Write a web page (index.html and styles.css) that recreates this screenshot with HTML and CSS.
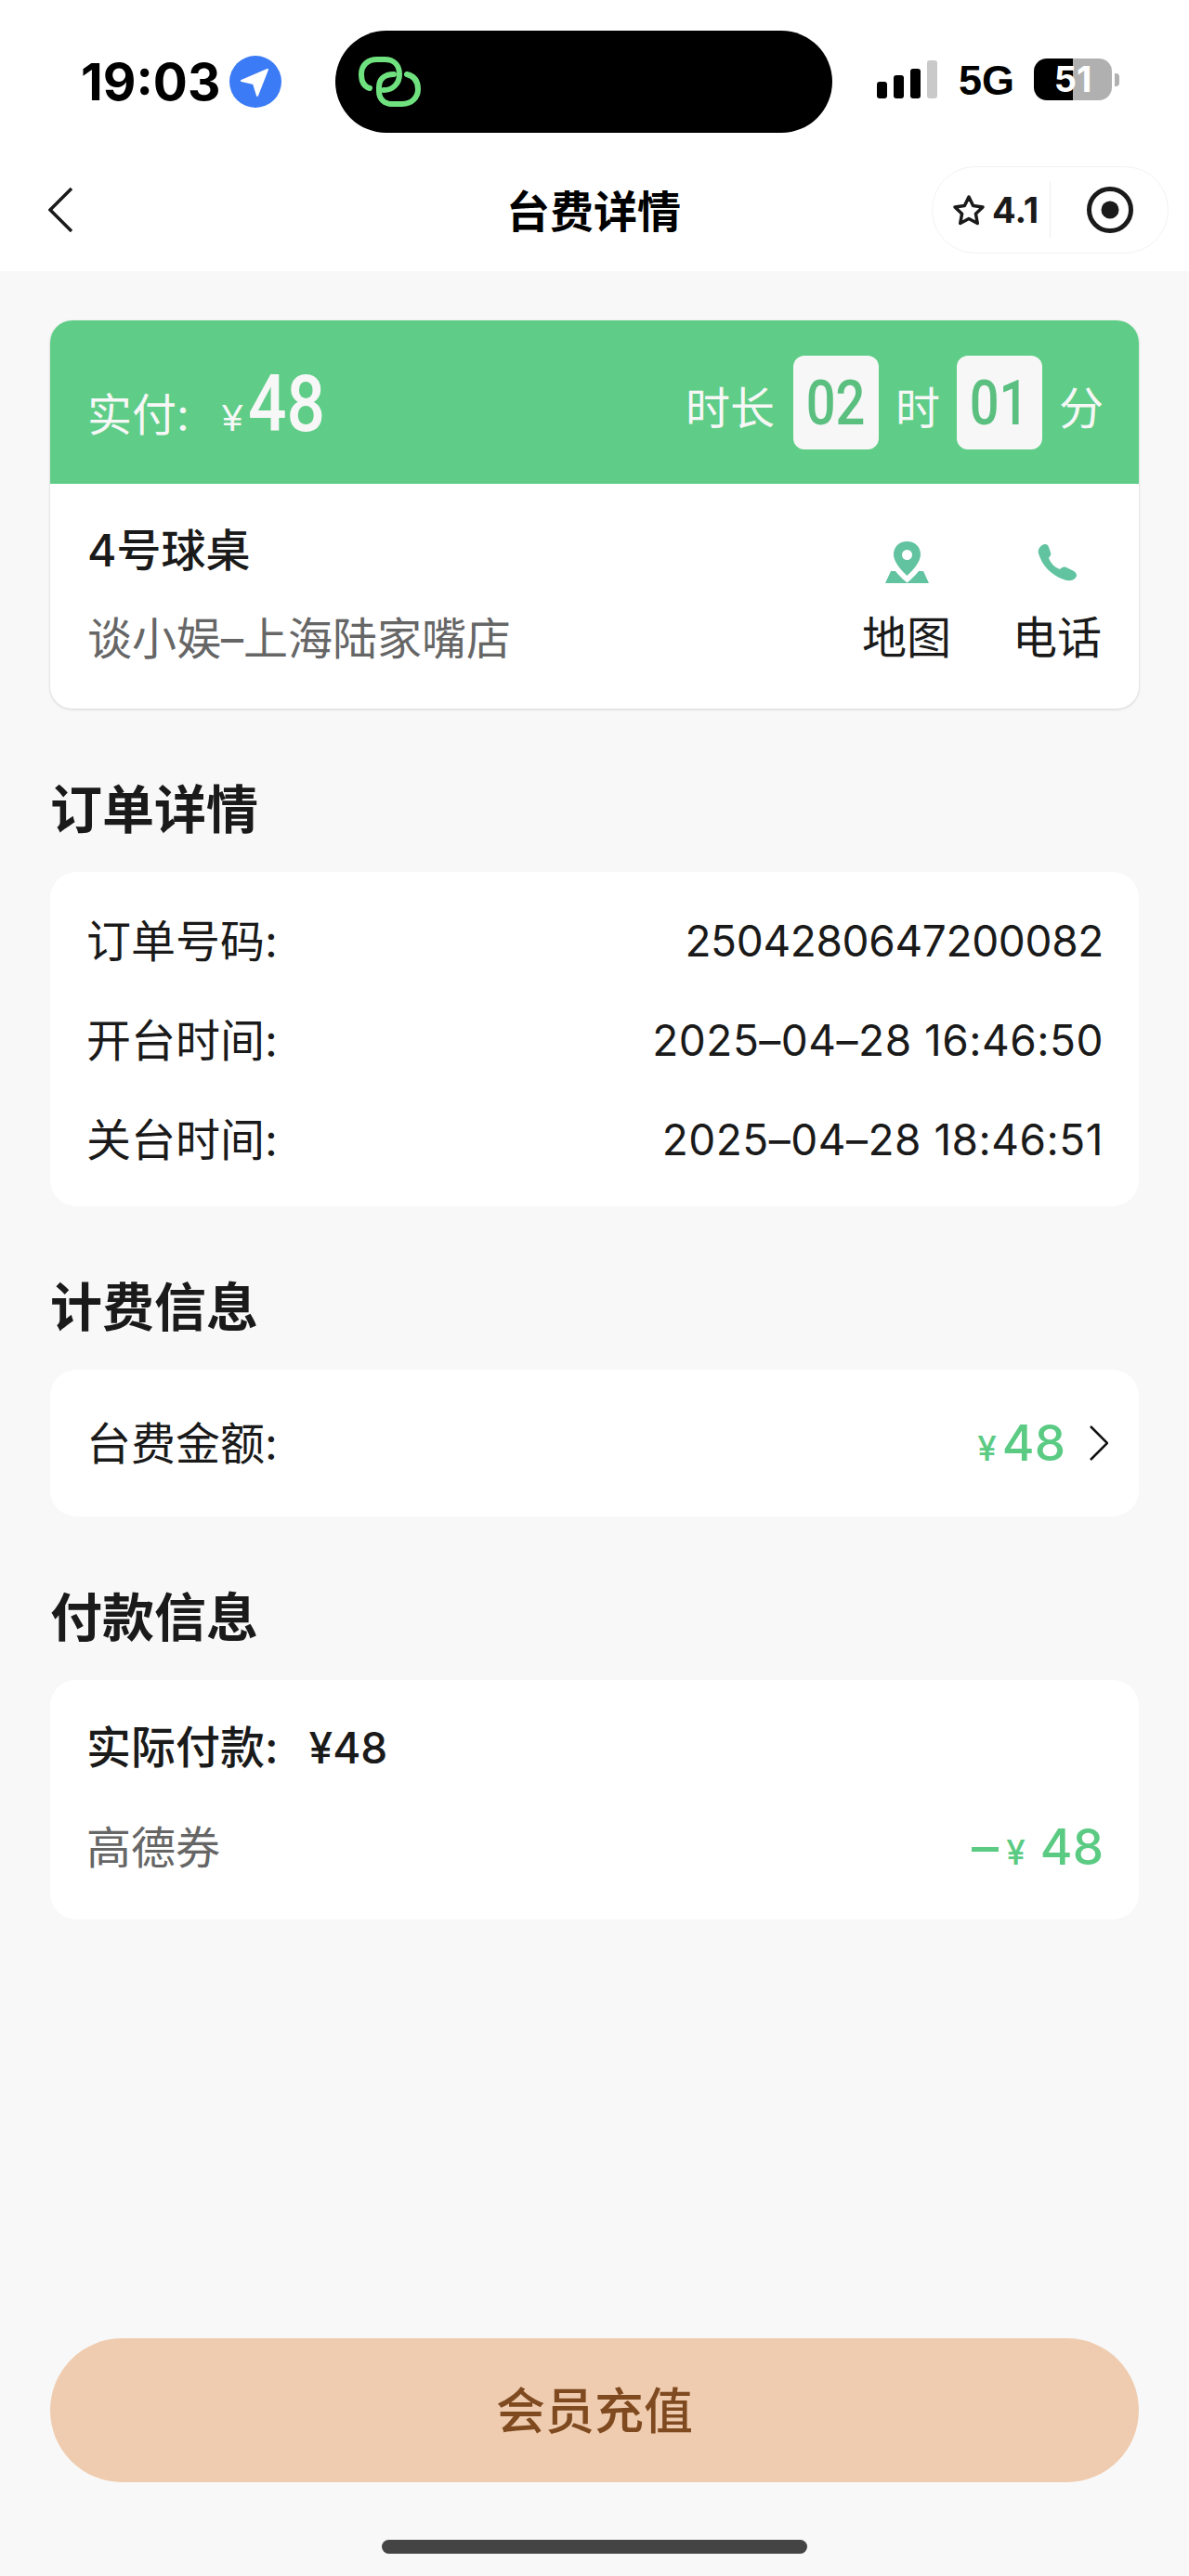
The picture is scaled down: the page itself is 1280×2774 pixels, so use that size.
FILE: index.html
```html
<!DOCTYPE html>
<html lang="zh-CN">

<head>
	<meta charset="UTF-8">
	<meta name="viewport" content="width=device-width, initial-scale=1.0">
	<title>台费详情</title>
	<link rel="stylesheet" href="styles.css">
</head>

<body>
	<div class="page">
		<!-- Status bar -->
		<div class="status-bar">
			<span class="time">19:03</span>
			<svg class="locate" viewBox="0 0 56 56">
				<circle cx="28" cy="28" r="28" fill="#3b7bf6" />
				<path d="M41 15 13 27l13 3 4 13z" fill="#fff" stroke="#fff" stroke-width="2" stroke-linejoin="round" />
			</svg>
			<div class="island">
				<svg class="island-logo" viewBox="0 0 67 54">
					<path d="M12 34C5 32 3 26 3 19 3 9 10 3 20 3h8c10 0 16 6 16 16s-7 17-17 17" fill="none" stroke="#6fe27f"
						stroke-width="6" stroke-linecap="round" />
					<path d="M38 19c-10 0-16 5-16 14v4c0 9 6 14 14 14h11c10 0 17-7 17-16 0-8-4-14-12-16" fill="none"
						stroke="#6fe27f" stroke-width="6" stroke-linecap="round" />
				</svg>
			</div>
			<div class="signal">
				<i class="bar-1"></i>
				<i class="bar-2"></i>
				<i class="bar-3"></i>
				<i class="bar-4"></i>
			</div>
			<span class="network">5G</span>
			<div class="battery">51</div>
			<i class="battery-nub"></i>
		</div>

		<!-- Nav -->
		<header class="nav">
			<svg class="back" viewBox="0 0 26 48">
				<path d="M25 1 2 24l23 23" fill="none" stroke="#1a1a1a" stroke-width="3.5" />
			</svg>
			<h1 class="nav-title">台费详情</h1>
			<div class="capsule">
				<svg class="star" viewBox="0 0 36 34">
					<path d="m18 3 4.6 9.6 10.4 1.4-7.600 7.200 1.900 10.300L18 26.500 8.700 31.500l1.900-10.300L3 14l10.400-1.400z"
						fill="none" stroke="#1a1a1a" stroke-width="3.500" stroke-linejoin="round" />
				</svg>
				<span class="rating">4.1</span>
				<i class="capsule-line"></i>
				<svg class="target" viewBox="0 0 50 50">
					<circle cx="25" cy="25" r="22.500" fill="none" stroke="#1a1a1a" stroke-width="5" />
					<circle cx="25" cy="25" r="9.500" fill="#1a1a1a" />
				</svg>
			</div>
		</header>

		<main class="content">
			<section class="hero">
				<div class="hero-top">
					<div class="paid">
						<span class="paid-label">实付:</span>
						<span class="paid-yen">¥</span>
						<span class="paid-num">48</span>
					</div>
					<div class="duration">
						<span class="duration-text duration-label">时长</span>
						<b class="time-box"><span class="time-digits">02</span></b>
						<span class="duration-text">时</span>
						<b class="time-box"><span class="time-digits">01</span></b>
						<span class="duration-text">分</span>
					</div>
				</div>
				<div class="hero-body">
					<div class="venue">
						<div class="venue-table">4号球桌</div>
						<div class="venue-name">谈小娱–上海陆家嘴店</div>
					</div>
					<div class="action action-map">
						<svg class="icon-pin" viewBox="0 0 47 45">
							<path fill-rule="evenodd"
								d="M23.500 0C32 0 38 6 38 14c0 8-8 17-14.500 23C17 31 9 22 9 14 9 6 15 0 23.500 0zm0 9a5.500 5.500 0 1 0 0 11 5.500 5.500 0 0 0 0-11z"
								fill="#62c3a0" />
							<path d="M6 32h5c3 4 7 8 12.500 12.500C29 40 33 36 36 32h5l6 13H0z" fill="#62c3a0" />
						</svg>
						<span>地图</span>
					</div>
					<div class="action action-phone">
						<svg class="icon-phone" viewBox="0 0 43 41">
							<path d="M5 2C8 0 11 1 12 4l2 6c1 3-1 4-2 6 2 5 6 10 12 12 2-2 4-3 7-2l8 4c3 2 4 5 2 7-3 4-8 4-13 2C14 34 5 24 1 11 0 7 2 4 5 2z"
								fill="#62c3a0" />
						</svg>
						<span>电话</span>
					</div>
				</div>
			</section>

			<section class="block">
				<h2 class="block-title">订单详情</h2>
				<div class="card card-order">
					<div class="row">
						<span class="row-label">订单号码:</span>
						<span class="order-no">2504280647200082</span>
					</div>
					<div class="row">
						<span class="row-label">开台时间:</span>
						<span class="order-date">2025–04–28 16:46:50</span>
					</div>
					<div class="row">
						<span class="row-label">关台时间:</span>
						<span class="order-date">2025–04–28 18:46:51</span>
					</div>
				</div>
			</section>

			<section class="block">
				<h2 class="block-title">计费信息</h2>
				<div class="card card-fee">
					<span class="row-label">台费金额:</span>
					<div class="fee-value">
						<span class="money"><small>¥</small>48</span>
						<svg class="chevron" viewBox="0 0 20 38">
							<path d="m1 1 18 18L1 37" fill="none" stroke="#111" stroke-width="2.500" />
						</svg>
					</div>
				</div>
			</section>

			<section class="block">
				<h2 class="block-title">付款信息</h2>
				<div class="card card-pay">
					<div class="pay-total">实际付款:<span class="pay-sum">¥48</span></div>
					<div class="pay-coupon">
						<span class="row-label">高德券</span>
						<span class="money money-minus"><i class="minus"></i><small>¥</small><span class="money-gap">48</span></span>
					</div>
				</div>
			</section>

			<button class="recharge">会员充值</button>
		</main>

		<div class="home-bar"></div>
	</div>
</body>

</html>
```

FILE: styles.css
```css
* {
	margin: 0;
	padding: 0;
	box-sizing: border-box;
	font-family: Inter, "Noto Sans CJK SC", sans-serif;
}

:root {
	--green: #5fcd87;
	--green-text: #5bcb84;
	--page: #f8f8f8;
	--text: #1a1a1a;
	--muted: #666;
}

body {
	background: var(--page);
	color: var(--text);
}

.page {
	display: flex;
	flex-direction: column;
	width: 1280px;
	height: 2774px;
}

.status-bar {
	display: flex;
	align-items: center;
	height: 176px;
	padding-left: 87px;
	background: #fff;
}

.time {
	width: 149px;
	font-size: 55px;
	font-weight: 700;
	color: #000;
}

.locate {
	width: 56px;
	height: 56px;
	margin-left: 11px;
}

.island {
	display: flex;
	align-items: center;
	width: 535px;
	height: 110px;
	margin-left: 58px;
	padding-left: 25px;
	border-radius: 55px;
	background: #000;
}

.island-logo {
	width: 67px;
	height: 54px;
}

.signal {
	display: flex;
	align-items: flex-end;
	gap: 7px;
	height: 42px;
	margin-left: 48px;
	margin-top: -6px;
}

.signal i {
	width: 11px;
	border-radius: 3px;
	background: #000;
}

.signal .bar-1 {
	height: 18px;
}

.signal .bar-2 {
	height: 25px;
}

.signal .bar-3 {
	height: 32px;
}

.signal .bar-4 {
	height: 41px;
	background: #c9c9c9;
}

.network {
	margin-left: 23px;
	margin-top: -2px;
	font-size: 45px;
	font-weight: 600;
	color: #000;
	font-family: "Liberation Sans", sans-serif;
}

.battery {
	width: 84px;
	height: 45px;
	margin-left: 21px;
	margin-top: -5px;
	border-radius: 14px;
	background: linear-gradient(90deg, #000 50%, #b0b0b0 50%);
	color: #fff;
	font-size: 38px;
	font-weight: 700;
	line-height: 45px;
	text-align: center;
}

.battery-nub {
	width: 5px;
	height: 14px;
	margin-left: 3px;
	margin-top: -5px;
	border-radius: 0 4px 4px 0;
	background: #b0b0b0;
}

.nav {
	display: grid;
	grid-template-columns: 1fr auto 1fr;
	align-items: center;
	height: 116px;
	padding: 0 30px 16px;
	background: #fff;
}

.back {
	width: 26px;
	height: 48px;
	margin-left: 22px;
}

.nav-title {
	margin-top: -4px;
	margin-right: 2px;
	font-size: 47px;
	font-weight: 700;
	color: #000;
}

.capsule {
	display: flex;
	align-items: center;
	justify-self: end;
	width: 255px;
	height: 94px;
	margin-right: -8px;
	padding-left: 21px;
	border: 1px solid #f2f2f2;
	border-radius: 47px;
}

.star {
	width: 36px;
	height: 34px;
}

.rating {
	width: 56px;
	margin-left: 7px;
	font-size: 38px;
	font-weight: 700;
}

.capsule-line {
	width: 1px;
	height: 60px;
	margin-left: 6px;
	background: #ececec;
}

.target {
	width: 50px;
	height: 50px;
	margin-left: 39px;
}

.content {
	display: flex;
	flex-direction: column;
	flex: 1;
	padding: 53px 54px 0;
}

.hero {
	height: 418px;
	border-radius: 24px;
	background: #fff;
	box-shadow: 0 1px 2px 1px #e2e2e2;
}

.hero-top {
	display: flex;
	align-items: center;
	justify-content: space-between;
	height: 176px;
	padding: 0 38px 0 40px;
	border-radius: 24px 24px 0 0;
	background: var(--green);
	color: #f7f7f7;
	font-size: 48px;
}

.paid {
	display: flex;
	align-items: baseline;
	padding-top: 18px;
}

.paid-label {
	width: 145px;
}

.paid-yen {
	margin-right: 6px;
	font-size: 40px;
	font-family: "Liberation Sans", sans-serif;
}

.paid-num,
.time-digits {
	display: inline-block;
	font-family: Roboto, sans-serif;
	font-weight: 500;
}

.paid-num {
	margin-top: -14px;
	font-size: 86px;
	line-height: 1;
	transform: scaleX(0.85);
	transform-origin: left;
}

.duration {
	display: flex;
	align-items: center;
	gap: 18px;
}

.duration-text {
	margin-top: 6px;
}

.duration-label {
	margin-right: 2px;
}

.time-box {
	width: 92px;
	height: 101px;
	border-radius: 12px;
	background: #f7f7f7;
	color: #5bbf80;
	font-size: 66px;
	line-height: 101px;
	text-align: center;
}

.time-digits {
	transform: scaleX(0.85);
}

.hero-body {
	display: flex;
	align-items: center;
	height: 242px;
	padding: 0 40px;
}

.venue {
	flex: 1;
}

.venue-table {
	margin-top: -4px;
	font-size: 48px;
	font-weight: 500;
	line-height: 66px;
}

.venue-name {
	margin-top: 29px;
	color: var(--muted);
	font-size: 48px;
	font-weight: 400;
	line-height: 66px;
}

.action {
	display: flex;
	flex-direction: column;
	align-items: center;
	width: 96px;
	margin-top: 18px;
	font-size: 48px;
	font-weight: 400;
}

.action-map {
	margin-right: 66px;
}

.action span {
	margin-top: 26px;
	line-height: 66px;
}

.icon-pin {
	width: 47px;
	height: 45px;
}

.icon-phone {
	width: 43px;
	height: 41px;
	margin: 2px 0;
}

.block {
	margin-top: 72px;
}

.block-title {
	height: 70px;
	font-size: 56px;
	font-weight: 700;
	line-height: 74px;
}

.card {
	margin-top: 34px;
	border-radius: 28px;
	background: #fff;
	font-size: 46px;
	font-weight: 400;
}

.row-label {
	margin-top: -6px;
	font-size: 48px;
}

.card-order {
	padding: 20px 38px 19px 39px;
}

.row {
	display: flex;
	align-items: center;
	justify-content: space-between;
	height: 107px;
}

.order-no {
	letter-spacing: -0.35px;
}

.order-date {
	letter-spacing: 0.5px;
}

.card-fee {
	display: flex;
	align-items: center;
	justify-content: space-between;
	height: 158px;
	padding: 0 33px 0 39px;
}

.fee-value {
	display: flex;
	align-items: center;
	gap: 26px;
}

.chevron {
	width: 20px;
	height: 38px;
}

.money {
	color: var(--green-text);
	font-size: 53px;
	font-weight: 500;
}

.money small {
	margin-right: 6px;
	font-size: 37px;
}

.money-gap {
	margin-left: 10px;
}

.minus {
	display: inline-block;
	width: 29px;
	height: 5px;
	margin-right: 8px;
	vertical-align: 14px;
	background: var(--green-text);
}

.card-pay {
	height: 258px;
	padding: 38px 38px 0 39px;
}

.pay-total {
	height: 70px;
	font-size: 48px;
	font-weight: 500;
	line-height: 70px;
}

.pay-sum {
	margin-left: 33px;
	font-size: 46px;
}

.pay-coupon {
	display: flex;
	align-items: center;
	justify-content: space-between;
	height: 70px;
	margin-top: 37px;
	color: var(--muted);
}

.recharge {
	height: 155px;
	margin-top: auto;
	padding-bottom: 5px;
	border: none;
	border-radius: 78px;
	background: #efccaf;
	color: #7f4a20;
	font-size: 53px;
	font-weight: 500;
}

.home-bar {
	width: 458px;
	height: 15px;
	margin: 62px auto 24px;
	border-radius: 8px;
	background: #444;
}
```
